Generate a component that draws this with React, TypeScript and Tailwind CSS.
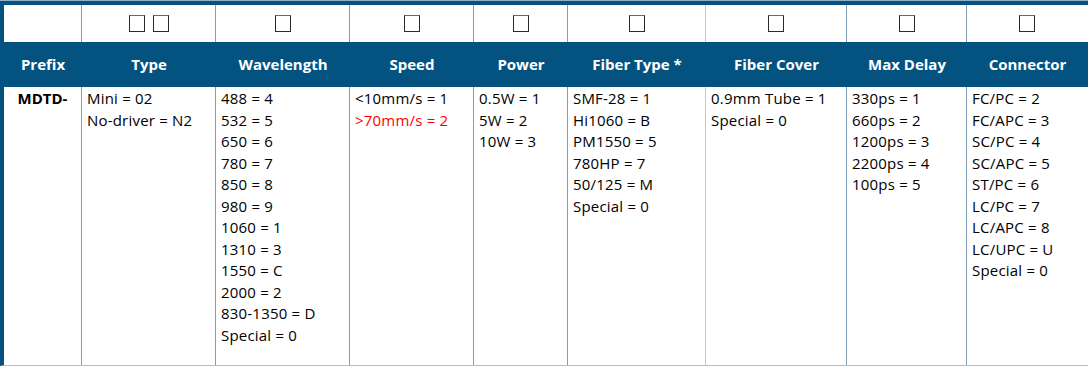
import React from "react";

type Col = {
    title: string;
    width: string;
    boxes: number;
    divider: string;
    lines: { text: string; red?: boolean }[];
};

const t = (text: string, red = false) => ({ text, red });

const columns: Col[] = [
    { title: "Type", width: "w-[134px]", boxes: 2, divider: "border-[#7f9db5]", lines: [t("Mini = 02"), t("No-driver = N2")] },
    {
        title: "Wavelength",
        width: "w-[134px]",
        boxes: 1,
        divider: "border-[#7f9db5]",
        lines: [
            t("488 = 4"),
            t("532 = 5"),
            t("650 = 6"),
            t("780 = 7"),
            t("850 = 8"),
            t("980 = 9"),
            t("1060 = 1"),
            t("1310 = 3"),
            t("1550 = C"),
            t("2000 = 2"),
            t("830-1350 = D"),
            t("Special = 0"),
        ],
    },
    { title: "Speed", width: "w-[124px]", boxes: 1, divider: "border-[#7f9db5]", lines: [t("<10mm/s = 1"), t(">70mm/s = 2", true)] },
    { title: "Power", width: "w-[94px]", boxes: 1, divider: "border-[#7f9db5]", lines: [t("0.5W = 1"), t("5W = 2"), t("10W = 3")] },
    {
        title: "Fiber Type *",
        width: "w-[138px]",
        boxes: 1,
        divider: "border-[#b3cce0]",
        lines: [t("SMF-28 = 1"), t("Hi1060 = B"), t("PM1550 = 5"), t("780HP = 7"), t("50/125 = M"), t("Special = 0")],
    },
    { title: "Fiber Cover", width: "w-[141px]", boxes: 1, divider: "border-[#7f9db5]", lines: [t("0.9mm Tube = 1"), t("Special = 0")] },
    {
        title: "Max Delay",
        width: "w-[120px]",
        boxes: 1,
        divider: "border-[#7f9db5]",
        lines: [t("330ps = 1"), t("660ps = 2"), t("1200ps = 3"), t("2200ps = 4"), t("100ps = 5")],
    },
    {
        title: "Connector",
        width: "flex-1",
        boxes: 1,
        divider: "border-transparent",
        lines: [
            t("FC/PC = 2"),
            t("FC/APC = 3"),
            t("SC/PC = 4"),
            t("SC/APC = 5"),
            t("ST/PC = 6"),
            t("LC/PC = 7"),
            t("LC/APC = 8"),
            t("LC/UPC = U"),
            t("Special = 0"),
        ],
    },
];

const Box = () => <div className="w-[16px] h-[17px] border border-[#2a2a2a] border-t-[#6a6a6a]" />;

export default function App() {
    return (
        <div
            className="w-[1088px] h-[366px] bg-white overflow-hidden text-black"
            style={{ fontFamily: "'Open Sans', Lato, sans-serif" }}
        >
            <div className="h-px bg-[#8fb0c8]" />
            <div className="flex flex-col h-[365px] border-l-4 border-t-4 border-b border-l-[#03527f] border-t-[#03527f] border-b-[#a7c0d4]">
                {/* checkbox row */}
                <div className="flex h-[37px]">
                    <div className="w-[78px] border-r border-[#7f9db5]" />
                    {columns.map((c) => (
                        <div key={c.title} className={`${c.width} border-r ${c.divider} flex items-center justify-center gap-[8px]`}>
                            {Array.from({ length: c.boxes }).map((_, i) => (
                                <Box key={i} />
                            ))}
                        </div>
                    ))}
                </div>

                {/* header row */}
                <div className="flex h-[45px] bg-[#03527f] text-white font-bold text-[15px]">
                    <div className="w-[78px] flex items-center justify-center">Prefix</div>
                    {columns.map((c) => (
                        <div key={c.title} className={`${c.width} flex items-center justify-center`}>
                            {c.title}
                        </div>
                    ))}
                </div>

                {/* values */}
                <div className="flex flex-1 text-[15px] leading-[21.5px] tracking-[0.2px]">
                    <div className="w-[78px] border-r border-[#7f9db5] text-center font-bold tracking-normal pt-px">MDTD-</div>
                    {columns.map((c) => (
                        <div key={c.title} className={`${c.width} border-r ${c.divider} pl-[5px] pt-px`}>
                            {c.lines.map((l) => (
                                <div key={l.text} className={l.red ? "text-[#ff0000]" : ""}>
                                    {l.text}
                                </div>
                            ))}
                        </div>
                    ))}
                </div>
            </div>
        </div>
    );
}
